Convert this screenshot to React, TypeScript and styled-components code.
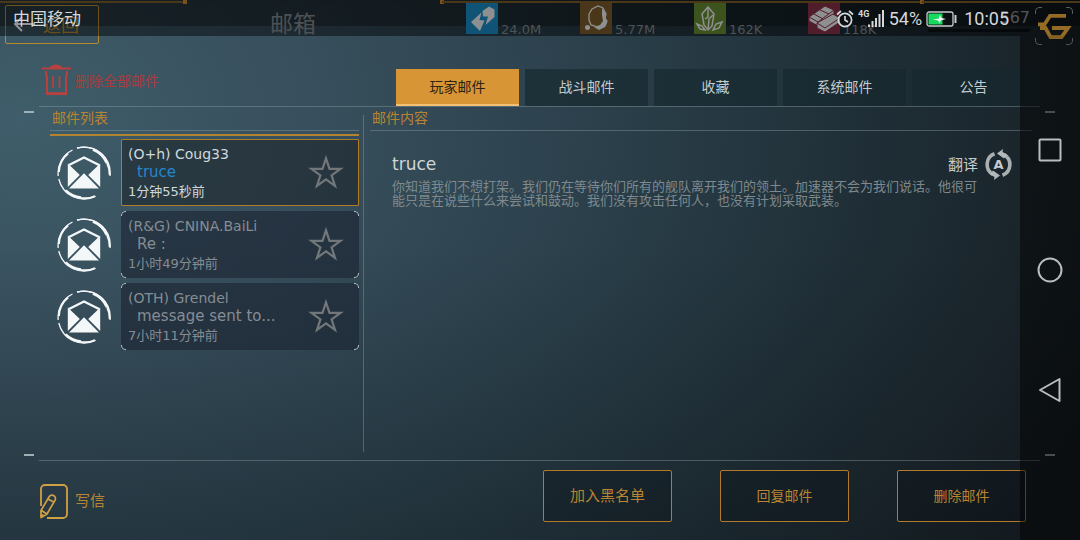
import React, { useState } from "react";
import styled, { createGlobalStyle, css } from "styled-components";

const cjk = `"Noto Sans CJK SC", sans-serif`;
const gameFont = `"DejaVu Sans", ${cjk}`;
const amber = "#b98432";
const hairline = "rgba(140, 160, 168, 0.42)";

const GlobalStyle = createGlobalStyle`
  * { box-sizing: border-box; }
  body { margin: 0; background: #12181c; }
  button { font: inherit; color: inherit; background: none; border: 0; padding: 0; cursor: pointer; }
  h1, h2, h3, p, ul { margin: 0; padding: 0; font-weight: 400; }
  svg { display: block; flex: none; }
`;

const Screen = styled.div`
  position: relative;
  min-height: 100vh;
  display: flex;
  flex-direction: column;
  overflow: hidden;
  color: #c5cdd0;
  font-family: ${cjk};
  font-size: 14px;
  line-height: 20px;
  background:
    linear-gradient(180deg, rgba(10, 16, 20, 0) 45%, rgba(10, 16, 20, 0.22) 100%),
    radial-gradient(ellipse 110% 165% at 2% 22%, #3f5d6a 0%, #384f5d 24%, #2a3f4a 50%, #1f2e36 72%, #161d22 96%);
`;

/* ---------- header ---------- */

const TopRail = styled.div`
  display: flex;
  height: 5px;
  background: rgba(0, 0, 0, 0.36);
`;

const RailPart = styled.span<{ $grow: number; $lit?: boolean; $dot?: boolean }>`
  position: relative;
  flex: ${(p) => p.$grow} 1 0;
  height: 3px;
  border-bottom: 2px solid ${(p) => (p.$lit ? "#80602a" : "transparent")};
  ${(p) =>
    p.$dot &&
    css`
      &::after {
        content: "";
        position: absolute;
        right: -2px;
        top: 0;
        width: 4px;
        height: 4px;
        background: #d08a2c;
      }
    `}
`;

const Header = styled.header`
  display: flex;
  align-items: flex-start;
  height: 39px;
  padding: 0 7px 0 5px;
  background: linear-gradient(rgba(0, 0, 0, 0.36) 21px, rgba(0, 0, 0, 0.08) 21px, rgba(0, 0, 0, 0.08) 31px, transparent 31px);
`;

const BackButton = styled.button`
  display: flex;
  align-items: center;
  gap: 8px;
  width: 94px;
  height: 39px;
  padding: 0 0 1px 7px;
  border: 1px solid #b88a30;
  border-radius: 2px;
  color: ${amber};
  font-size: 18px;
`;

const Title = styled.h1`
  margin-left: 171px;
  font-size: 23px;
  line-height: 34px;
  color: #858c90;
`;

const Resources = styled.ul`
  flex: 1;
  display: flex;
  list-style: none;
  margin: -3px 0 0 150px;
`;

const Resource = styled.li`
  display: flex;
  align-items: flex-end;
  gap: 3px;
  width: 114px;
  height: 32px;
  font: 13px/14px ${gameFont};
  color: #858d91;
  & > span { margin-bottom: -3px; }
`;

const ResourceTile = styled.svg<{ $bg: string }>`
  width: 32px;
  height: 32px;
  background: ${(p) => p.$bg};
`;

const Score = styled.div`
  width: 102px;
  height: 27px;
  border-bottom: 3px solid rgba(0, 0, 0, 0.5);
  text-align: right;
  font: 16px/26px ${gameFont};
  color: #8a9194;
`;

const bracketMask = (size: number) => css`
  mask:
    linear-gradient(#000 0 0) 0 0 / ${size}px ${size}px no-repeat,
    linear-gradient(#000 0 0) 100% 0 / ${size}px ${size}px no-repeat,
    linear-gradient(#000 0 0) 0 100% / ${size}px ${size}px no-repeat,
    linear-gradient(#000 0 0) 100% 100% / ${size}px ${size}px no-repeat;
`;

const LogoButton = styled.button`
  position: relative;
  margin: 2px 0 0 5px;
  width: 38px;
  height: 38px;
  &::before {
    content: "";
    position: absolute;
    inset: 0;
    border: 1px solid #9aa3a7;
    border-radius: 4px;
    ${bracketMask(7)}
  }
`;

/* ---------- toolbar ---------- */

const Toolbar = styled.div`
  display: flex;
  align-items: flex-end;
  height: 62px;
  padding: 0 45px 0 41px;
`;

const DeleteAll = styled.button`
  display: flex;
  align-items: center;
  gap: 3px;
  width: 322px;
  margin-bottom: 10px;
  color: #a93d3e;
`;

const Tabs = styled.nav`
  flex: 1;
  display: flex;
  gap: 6px;
  margin-left: 33px;
`;

const Tab = styled.button<{ $active: boolean }>`
  flex: 1;
  height: 37px;
  padding-bottom: 2px;
  border-bottom: 2px solid ${(p) => (p.$active ? "#f3c173" : "transparent")};
  background: ${(p) => (p.$active ? "#d79536" : "rgba(22, 40, 46, 0.65)")};
  color: ${(p) => (p.$active ? "#2c2313" : "#c3cbce")};
`;

/* ---------- mail frame ---------- */

const Frame = styled.main`
  flex: 1;
  display: grid;
  grid-template-columns: 39px 1fr 40px;
`;

const Gutter = styled.div<{ $dim?: boolean }>`
  display: flex;
  flex-direction: column;
  justify-content: space-between;
  align-items: center;
  padding: 5px ${(p) => (p.$dim ? "20px 5px 0" : "0 5px 19px")};
  &::before, &::after {
    content: "";
    width: 10px;
    height: 2px;
    background: ${(p) => (p.$dim ? "#8b9498" : "#9eb0b6")};
  }
`;

const Panes = styled.div`
  display: grid;
  grid-template-columns: 324px 1fr;
  border: solid ${hairline};
  border-width: 1px 0;
`;

const ListPane = styled.section`
  padding: 0 4px 0 11px;
`;

const PaneHeading = styled.h2`
  height: 24px;
  display: flex;
  align-items: center;
  padding: 0 0 3px 2px;
  border-bottom: 1px solid ${hairline};
  font-size: 14px;
  line-height: 16px;
  color: ${amber};
`;

const MailList = styled.ul`
  list-style: none;
  display: flex;
  flex-direction: column;
  gap: 5px;
  margin-top: 3px;
  padding-top: 3px;
  border-top: 2px solid #b3842f;
`;

const MailRow = styled.li`
  display: flex;
  align-items: center;
  gap: 9px;
  padding-left: 7px;
`;

const MailCard = styled.button<{ $active: boolean }>`
  position: relative;
  flex: 1;
  min-width: 0;
  display: flex;
  align-items: center;
  justify-content: space-between;
  height: 67px;
  padding: 0 15px 0 7px;
  border-radius: 3px;
  text-align: left;
  background: ${(p) => (p.$active ? "rgba(27, 36, 42, 0.58)" : "rgba(27, 36, 50, 0.62)")};
  color: ${(p) => (p.$active ? "#cfd8dc" : "#848d93")};
  &::before {
    content: "";
    position: absolute;
    inset: 0;
    border: 1px solid ${(p) => (p.$active ? "#b07c28" : "#b3bfc4")};
    border-radius: ${(p) => (p.$active ? 1 : 4)}px;
    ${(p) => !p.$active && bracketMask(5)}
  }
`;

const MailText = styled.span`
  display: flex;
  flex-direction: column;
  min-width: 0;
  white-space: nowrap;
  font: 14px/18px ${gameFont};
`;

const Subject = styled.span<{ $active: boolean }>`
  padding-left: 9px;
  font-size: 15px;
  color: ${(p) => (p.$active ? "#2587cc" : "inherit")};
`;

const Age = styled.span`
  padding-top: 2px;
  font-size: 13px;
`;

const Reader = styled.article`
  padding: 0 8px 0 7px;
  background: linear-gradient(${hairline}, ${hairline}) 0 8px / 1px calc(100% - 16px) no-repeat;
`;

const ReaderTop = styled.div`
  display: flex;
  align-items: center;
  justify-content: space-between;
  height: 30px;
  margin-top: 18px;
  padding: 0 19px 0 22px;
`;

const MailTitle = styled.h3`
  font: 17px/20px ${gameFont};
  color: #cfd6d9;
`;

const Translate = styled.button`
  display: flex;
  align-items: center;
  gap: 6px;
  font-size: 15px;
  color: #c5cbce;
`;

const MailBody = styled.p`
  padding: 0 46px 0 22px;
  font-size: 13px;
  line-height: 14px;
  color: #7f898d;
`;

/* ---------- footer ---------- */

const Footer = styled.footer`
  display: flex;
  align-items: flex-start;
  justify-content: space-between;
  height: 79px;
  padding: 9px 54px 0 39px;
  color: ${amber};
`;

const Compose = styled.button`
  display: flex;
  align-items: center;
  gap: 6px;
  margin-top: 14px;
  font-size: 15px;
  & > span { padding-bottom: 3px; }
`;

const Actions = styled.div`
  display: flex;
  gap: 48px;
`;

const ActionButton = styled.button<{ $large?: boolean }>`
  width: 129px;
  height: 52px;
  padding-bottom: 3px;
  border: 1px solid #b27a2a;
  border-radius: 2px;
  background: rgba(12, 18, 22, 0.35);
  font-size: ${(p) => (p.$large ? 15 : 14)}px;
`;

/* ---------- system bars drawn over the game ---------- */

const StatusBar = styled.div`
  position: absolute;
  inset: 0 0 auto 0;
  height: 36px;
  display: flex;
  align-items: center;
  justify-content: space-between;
  padding: 1px 71px 0 13px;
  background: rgba(0, 0, 0, 0.42);
  color: #d5d8da;
  font: 18px/24px Roboto, ${cjk};
  pointer-events: none;
`;

const StatusGroup = styled.div`
  display: flex;
  align-items: center;
  gap: 4px;
`;

const Clock = styled.time`
  margin-left: 3px;
`;

const Carrier = styled.span`
  font-size: 17px;
`;

const SystemNav = styled.nav`
  position: absolute;
  inset: 0 0 0 auto;
  width: 60px;
  display: flex;
  flex-direction: column;
  align-items: center;
  justify-content: center;
  gap: 92px;
  background: linear-gradient(transparent 36px, rgba(0, 0, 0, 0.48) 36px);
  pointer-events: none;
  & > button { pointer-events: auto; }
`;

/* ---------- drawings ---------- */

const TrashIcon = () => (
  <svg width="31" height="33" viewBox="0 0 31 33" fill="none" stroke="#b8403e" strokeWidth="2">
    <path d="M8.500 5C9 .5 21 .5 21.500 5z" fill="#b8403e" stroke="none" />
    <path d="M1 5.500h29M5 8v4l1 1v18h19V13l1-1V8" />
    <path d="M12 13v12M18.500 13v12" strokeWidth="1.800" />
    <path d="M5 30.500h21" strokeWidth="2.600" />
  </svg>
);

const MailIcon = () => (
  <svg width="55" height="54" viewBox="0 0 55 54" fill="none" stroke="#f4f7f8">
    <path d="M53 30A26 26 0 0 0 20 2.200M15.500 4A26 26 0 0 0 1.200 30M1.800 33A26 26 0 0 0 38.500 50.400" strokeWidth="1.300" />
    <path d="M20 2.200A26 26 0 0 1 36 2.700" strokeWidth="1.300" />
    <path d="M36 3.400A25.300 25.300 0 0 1 50 17" strokeWidth="3" />
    <path d="M50 17A25.500 25.500 0 0 1 52.600 29" strokeWidth="1.800" />
    <path d="M1.800 26A25.300 25.300 0 0 1 11 7.500" strokeWidth="2.200" />
    <path d="M8.500 44.600A25.300 25.300 0 0 0 24 51.700" strokeWidth="2.800" />
    <path d="M24 52A25.500 25.500 0 0 0 38 50" strokeWidth="1.800" />
    <path d="M12 19 27 11.500 42 19" strokeWidth="2.400" />
    <g fill="#f4f7f8" stroke="none">
      <path d="M10.800 17.500 22.800 29 10.800 41zM43.200 17.500 31.200 29l12 12z" />
      <path d="M27 27.300 42 42.500H12z" />
    </g>
  </svg>
);

const StarIcon = () => (
  <svg width="36" height="36" viewBox="0 0 36 36" fill="none" stroke="#72777a" strokeWidth="2.200">
    <path d="M18 3.300l3.500 10.500h11l-8.900 6.500 3.400 10.500L18 24.300l-9 6.500 3.400-10.500-8.900-6.500h11z" />
  </svg>
);

const TranslateIcon = () => (
  <svg width="29" height="31" viewBox="0 0 29 31" fill="none" stroke="#aab0b2" strokeWidth="3.600">
    <path d="M10.500 4.800A11.300 11.300 0 0 0 9 25.300" />
    <path d="M18.500 26.200A11.300 11.300 0 0 0 20 5.700" />
    <path d="M13 4.500 19 0l-.5 3 4.500 2.500-3 4z" fill="#b4b9bb" stroke="none" />
    <path d="M16 26.500 10 31l.5-3L6 25.500l3-4z" fill="#b4b9bb" stroke="none" />
    <text x="14.500" y="20" textAnchor="middle" fontFamily="DejaVu Sans" fontWeight="700" fontSize="13" fill="#c5cacc" stroke="none">A</text>
  </svg>
);

const ComposeIcon = () => (
  <svg width="30" height="35" viewBox="0 0 30 35" fill="none" stroke="#d2a044" strokeWidth="1.800" strokeLinejoin="round">
    <path d="M2 22V5a4 4 0 0 1 4-4h18a4 4 0 0 1 4 4v25a4 4 0 0 1-4 4H8" />
    <path d="M2 26.500 10 13a3 3 0 0 1 6 3.200L8 30 2 33.500zM9 15l6 3.200M2.500 26.500l5 3.200" strokeWidth="1.700" />
    <path d="M2 29.500v4.500l4-2.500z" fill="#d2a044" stroke="none" />
  </svg>
);

const LogoIcon = () => (
  <svg width="38" height="38" viewBox="0 0 38 38" fill="none" stroke="#ffb944" strokeWidth="3.800">
    <path d="M31 8.800H15L9.500 17.400H3" />
    <path d="M5 21h5.500l5 9.200h11L33 21H17" />
  </svg>
);

const BackArrow = () => (
  <svg width="22" height="16" viewBox="0 0 22 16" fill="none" stroke="#ffffff" strokeWidth="2">
    <path d="M22 8H2M9 1 2 8l7 7" />
  </svg>
);

const white = "#f4f7f8";

const EnergyArt = () => (
  <g fill={white}>
    <path d="M5 20 15.500 10.500l-2 7.500 5 .5L14 29z" />
    <path d="M16.500 9 23 4.500l5.500 3V15l-9 8 2.500-8.500h-5z" />
  </g>
);
const OreArt = () => (
  <>
    <path d="M9 12l3-5 6-3 5 2 3 6-1 4 2 3-2 5-5 2-5-2-4-1-2-5z" fill="none" stroke={white} strokeWidth="1.300" />
    <path d="M22 6l4 6-1 3 2 4-2 6-6 3-5-3 6-2 3-4-1-6z" fill={white} />
    <circle cx="7.500" cy="25.500" r="2.500" fill={white} />
  </>
);
const CrystalArt = () => (
  <g fill="none" stroke={white} strokeWidth="1.500">
    <path d="M14 5l6 7-2 12-4 4-4-5-2-11z" />
    <path d="M14 6v9l-3 2M14 28l1-11 4-4" />
    <path d="M3 22l5 2 3 4-5-1zM28 20l-6 2-3 6 6-2z" />
  </g>
);
const AlloyArt = () => (
  <g fill={white} stroke="#8c324b" strokeWidth="1">
    <path d="M1 15 17 4l9 4v4L10 24 1 19z" />
    <path d="M1 15l9 5L26 8M6 12l9 5M12 8l9 4" fill="none" />
    <path d="M9 21 25 12l7 4v4L17 30l-8-4z" />
    <path d="M9 21l8 5 15-10" fill="none" />
  </g>
);

const AlarmIcon = () => (
  <svg width="18" height="18" viewBox="0 0 18 18" fill="none" stroke="#d5d8da" strokeWidth="1.700">
    <circle cx="9" cy="10" r="6.600" />
    <path d="M9 6v4l3 2M1 4.500 5 1M17 4.500 13 1" />
  </svg>
);

const SignalIcon = () => (
  <svg width="27" height="20" viewBox="0 0 27 20" fill="#d5d8da">
    <text x="0" y="8" fontFamily="Roboto" fontWeight="700" fontSize="9">4G</text>
    <path d="M10 15.500h2v2.500h-2zM13.500 12h2v6h-2zM17 9h2v9h-2zM20.500 5h2v13h-2zM24 1h2v17h-2z" />
  </svg>
);

const BatteryIcon = () => (
  <svg width="31" height="16" viewBox="0 0 31 16" fill="none">
    <rect x="1" y="1" width="26" height="14" rx="2" stroke="#c9cdcf" strokeWidth="1.300" />
    <rect x="2.500" y="2.500" width="14" height="11" fill="#16d95e" />
    <path d="M29.500 4v8" stroke="#c9cdcf" strokeWidth="2" />
    <path d="M7 8.500l6-1L13.500 4l2 3 4.500 1-5.500 1.500L14 12.500l-2-3z" fill="#f2f6f4" />
  </svg>
);

const resources = [
  { name: "能量", amount: "24.0M", bg: "#1a8fce", art: <EnergyArt /> },
  { name: "矿石", amount: "5.77M", bg: "#80602c", art: <OreArt /> },
  { name: "晶体", amount: "162K", bg: "#6a8f32", art: <CrystalArt /> },
  { name: "合金", amount: "118K", bg: "#8c324b", art: <AlloyArt /> },
];

const tabs = ["玩家邮件", "战斗邮件", "收藏", "系统邮件", "公告"];

const mails = [
  { from: "(O+h) Coug33", subject: "truce", age: "1分钟55秒前" },
  { from: "(R&G) CNINA.BaiLi", subject: "Re :", age: "1小时49分钟前" },
  { from: "(OTH) Grendel", subject: "message sent to...", age: "7小时11分钟前" },
];

export default function App() {
  const [tab, setTab] = useState(0);
  const [selected, setSelected] = useState(0);

  return (
    <Screen>
      <GlobalStyle />
      <TopRail>
        <RailPart $grow={185} $lit $dot />
        <RailPart $grow={257} $dot />
        <RailPart $grow={480} $lit $dot />
        <RailPart $grow={158} $lit />
      </TopRail>
      <Header>
        <BackButton>
          <BackArrow />
          返回
        </BackButton>
        <Title>邮箱</Title>
        <Resources>
          {resources.map((r) => (
            <Resource key={r.name}>
              <ResourceTile $bg={r.bg} viewBox="0 0 32 32" aria-label={r.name}>
                {r.art}
              </ResourceTile>
              <span>{r.amount}</span>
            </Resource>
          ))}
        </Resources>
        <Score>567</Score>
        <LogoButton aria-label="G">
          <LogoIcon />
        </LogoButton>
      </Header>

      <Toolbar>
        <DeleteAll>
          <TrashIcon />
          删除全部邮件
        </DeleteAll>
        <Tabs>
          {tabs.map((label, i) => (
            <Tab key={label} $active={i === tab} onClick={() => setTab(i)}>
              {label}
            </Tab>
          ))}
        </Tabs>
      </Toolbar>

      <Frame>
        <Gutter />
        <Panes>
          <ListPane>
            <PaneHeading>邮件列表</PaneHeading>
            <MailList>
              {mails.map((m, i) => (
                <MailRow key={m.from}>
                  <MailIcon />
                  <MailCard $active={i === selected} onClick={() => setSelected(i)}>
                    <MailText>
                      <span>{m.from}</span>
                      <Subject $active={i === selected}>{m.subject}</Subject>
                      <Age>{m.age}</Age>
                    </MailText>
                    <StarIcon />
                  </MailCard>
                </MailRow>
              ))}
            </MailList>
          </ListPane>
          <Reader>
            <PaneHeading>邮件内容</PaneHeading>
            <ReaderTop>
              <MailTitle>truce</MailTitle>
              <Translate>
                翻译
                <TranslateIcon />
              </Translate>
            </ReaderTop>
            <MailBody>
              你知道我们不想打架。我们仍在等待你们所有的舰队离开我们的领土。加速器不会为我们说话。他很可能只是在说些什么来尝试和鼓动。我们没有攻击任何人，也没有计划采取武装。
            </MailBody>
          </Reader>
        </Panes>
        <Gutter $dim />
      </Frame>

      <Footer>
        <Compose>
          <ComposeIcon />
          <span>写信</span>
        </Compose>
        <Actions>
          <ActionButton $large>加入黑名单</ActionButton>
          <ActionButton>回复邮件</ActionButton>
          <ActionButton>删除邮件</ActionButton>
        </Actions>
      </Footer>

      <StatusBar>
        <Carrier>中国移动</Carrier>
        <StatusGroup>
          <AlarmIcon />
          <SignalIcon />
          <span>54%</span>
          <BatteryIcon />
          <Clock>10:05</Clock>
        </StatusGroup>
      </StatusBar>
      <SystemNav>
        <button aria-label="最近任务">
          <svg width="28" height="28" viewBox="0 0 28 28" fill="none" stroke="#b9bdbf" strokeWidth="2">
            <rect x="3.500" y="3.500" width="21" height="21" rx="1" />
          </svg>
        </button>
        <button aria-label="主屏幕">
          <svg width="28" height="28" viewBox="0 0 28 28" fill="none" stroke="#b9bdbf" strokeWidth="2">
            <circle cx="14" cy="14" r="11.500" />
          </svg>
        </button>
        <button aria-label="后退">
          <svg width="28" height="28" viewBox="0 0 28 28" fill="none" stroke="#b9bdbf" strokeWidth="2" strokeLinejoin="round">
            <path d="M23.500 3v22L4 14z" />
          </svg>
        </button>
      </SystemNav>
    </Screen>
  );
}
